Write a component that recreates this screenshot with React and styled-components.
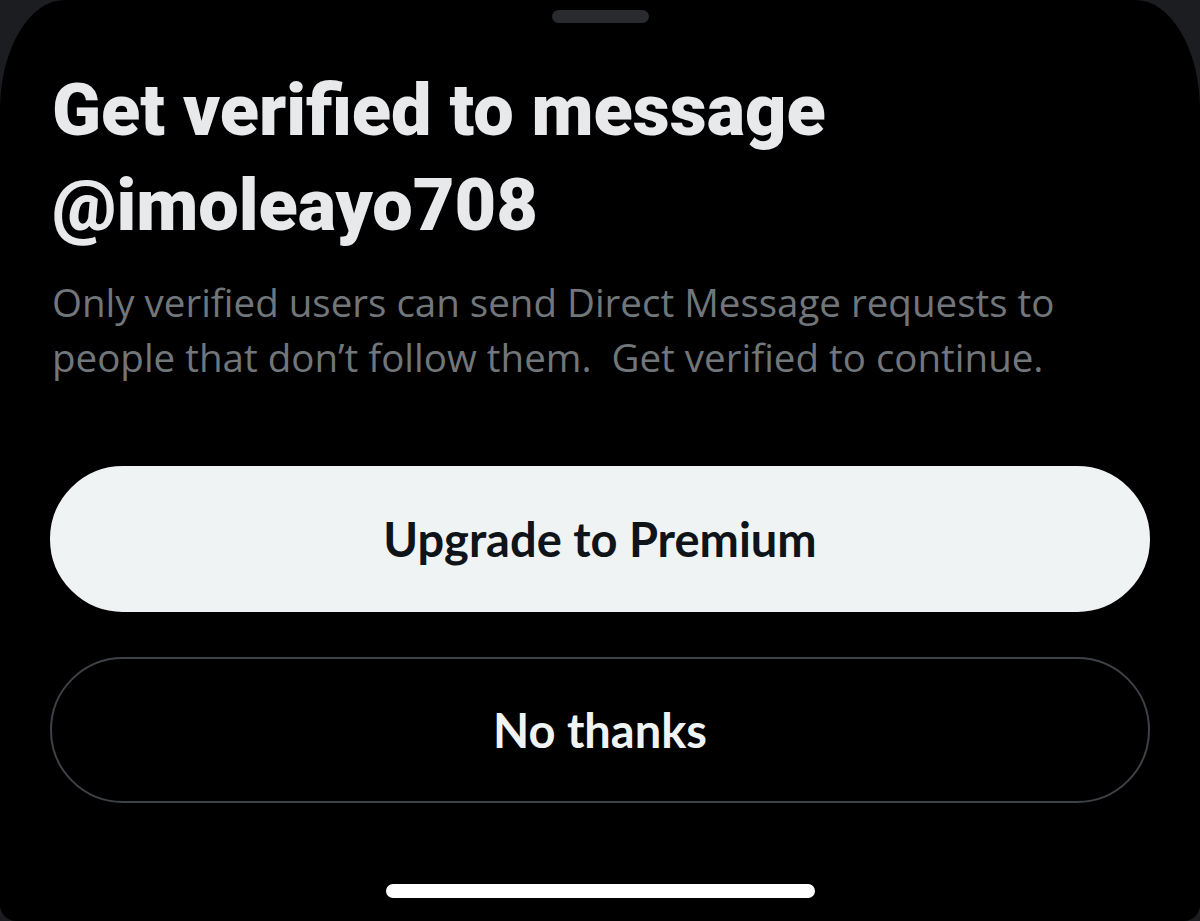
import React from 'react';
import styled, { createGlobalStyle } from 'styled-components';

const GlobalStyle = createGlobalStyle`
  html, body {
    margin: 0;
    padding: 0;
    background: #1c1d21;
  }
  * {
    box-sizing: border-box;
  }
`;

const Sheet = styled.div`
  width: 1200px;
  height: 921px;
  background: #000;
  border-radius: 65px 65px 16px 16px / 110px 110px 16px 16px;
  display: flex;
  flex-direction: column;
  align-items: stretch;
  padding: 10px 50px 0;
  overflow: hidden;
`;

const Grabber = styled.div`
  align-self: center;
  width: 97px;
  height: 13px;
  border-radius: 7px;
  background: #2a2b2f;
`;

const Title = styled.h1`
  margin: 40px 0 0 2px;
  font-family: Roboto, 'Liberation Sans', sans-serif;
  font-weight: 900;
  font-size: 72px;
  line-height: 95px;
  color: #e7e9ea;
`;

const Body = styled.p`
  margin: 22px 40px 0 2px;
  font-family: 'Open Sans', 'Noto Sans', sans-serif;
  font-weight: 400;
  font-size: 38.5px;
  line-height: 55px;
  color: #71767b;
`;

const Actions = styled.div`
  display: flex;
  flex-direction: column;
  gap: 45px;
  margin-top: 81px;
`;

const Button = styled.button`
  height: 146px;
  width: 100%;
  border-radius: 73px;
  border: 2px solid ${(p) => (p.$primary ? '#eff3f4' : '#3e4145')};
  background: ${(p) => (p.$primary ? '#eff3f4' : 'transparent')};
  color: ${(p) => (p.$primary ? '#0f1419' : '#eff3f4')};
  font-family: Lato, 'Liberation Sans', sans-serif;
  font-weight: 700;
  font-size: 47px;
  display: flex;
  align-items: center;
  justify-content: center;
  padding: 0;
`;

const HomeBar = styled.div`
  align-self: center;
  margin-top: auto;
  margin-bottom: 23px;
  width: 429px;
  height: 14px;
  border-radius: 7px;
  background: #fff;
`;

export default function App() {
  return (
    <>
      <GlobalStyle />
      <Sheet>
        <Grabber />
        <Title>
          Get verified to message
          <br />
          @imoleayo708
        </Title>
        <Body>
          Only verified users can send Direct Message requests to people that don’t follow them.&nbsp; Get verified to continue.
        </Body>
        <Actions>
          <Button $primary>Upgrade to Premium</Button>
          <Button>No thanks</Button>
        </Actions>
        <HomeBar />
      </Sheet>
    </>
  );
}
